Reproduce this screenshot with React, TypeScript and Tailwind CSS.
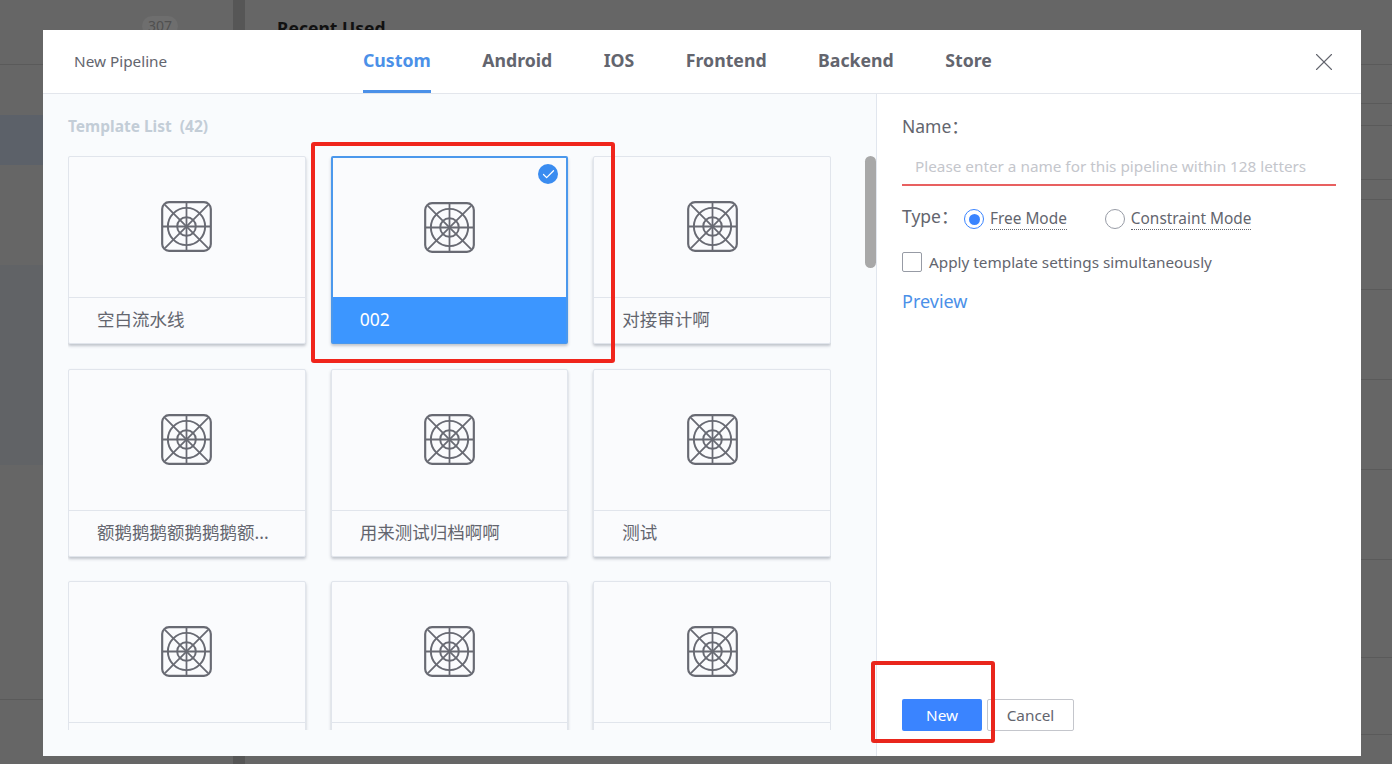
import { Check, X } from "lucide-react";

const font = { sans: "font-['Noto_Sans','Noto_Sans_CJK_SC',sans-serif]" };

const templates = [
  { name: "空白流水线" },
  { name: "002", selected: true },
  { name: "对接审计啊" },
  { name: "额鹅鹅鹅额鹅鹅鹅额..." },
  { name: "用来测试归档啊啊" },
  { name: "测试" },
  { name: "" },
  { name: "" },
  { name: "" },
];

const tabs = ["Custom", "Android", "IOS", "Frontend", "Backend", "Store"];

function TemplateIcon() {
  return (
    <svg width="51" height="51" viewBox="0 0 52 52" fill="none" stroke="#686a73">
      <rect x="1.2" y="1.2" width="49.6" height="49.6" rx="7" strokeWidth="2.2" />
      <circle cx="26" cy="26" r="19" strokeWidth="2" />
      <circle cx="26" cy="26" r="9.5" strokeWidth="2" />
      <path d="M26 1v50M1 26h50" strokeWidth="1.8" />
      <path d="M4 4l44 44M48 4L4 48" strokeWidth="1.8" />
    </svg>
  );
}

function TemplateCard({ name, selected }: { name: string; selected?: boolean }) {
  return (
    <div
      className={`relative h-[188px] rounded-[2px] border bg-[#fafbfd] shadow-[0_2px_3px_rgba(60,70,90,0.3)] ${
        selected ? "border-2 border-[#4b98ec]" : "border-[#e1e5ec]"
      }`}
    >
      {selected && (
        <span className="absolute right-[8px] top-[6px] flex h-5 w-5 items-center justify-center rounded-full bg-[#3a8cf0]">
          <Check size={15} color="#fff" strokeWidth={2} />
        </span>
      )}
      <div className={`flex items-center justify-center pb-[1px] ${selected ? "h-[139px]" : "h-[140px]"}`}>
        <TemplateIcon />
      </div>
      <div
        className={`flex h-[46px] items-center whitespace-nowrap pb-[2px] text-[17.5px] ${
          selected ? "bg-[#3c96ff] pl-[27px] text-white" : "border-t border-[#e1e5ec] pl-[28px] text-[#63656e]"
        }`}
      >
        {name}
      </div>
    </div>
  );
}

function BackgroundRow({ height, line = true, children }: { height: string; line?: boolean; children?: React.ReactNode }) {
  return (
    <div className={`${height} whitespace-nowrap pl-[131px] ${line ? "border-b border-[#5a5a5a]" : ""}`}>{children}</div>
  );
}

function VersionCell() {
  return (
    <div className="pt-[25px] text-sm leading-[18px]">
      <div className="text-[#333]">v_1.0</div>
      <div className="text-[#444]">2020</div>
    </div>
  );
}

export default function App() {
  return (
    <div className={`relative h-[764px] w-[1392px] overflow-hidden bg-[#666666] ${font.sans}`}>
      {/* page behind the dialog */}
      <div className="flex h-full">
        <aside className="flex w-[233px] flex-col">
          <div className="flex h-[65px] justify-end border-b border-[#5a5a5a] pr-[55px] pt-[16px]">
            <span className="h-5 rounded-full bg-[#6e6e6e] px-[6px] text-sm leading-5 text-[#505050]">307</span>
          </div>
          <div className="h-[50px]" />
          <div className="h-[50px] bg-[#5c6169]" />
          <div className="h-[100px]" />
          <div className="h-[200px] bg-[#616366]" />
          <div className="h-[235px] border-b border-[#5a5a5a]" />
        </aside>
        <div className="w-[12px] bg-[#565656]" />
        <main className="flex-1">
          <div className="h-[65px] border-b border-[#5a5a5a] pl-[32px] pt-[15px] text-[17.5px] font-bold text-[#111]">
            Recent Used
          </div>
          <BackgroundRow height="h-[39px]" />
          <BackgroundRow height="h-[22px]" />
          <BackgroundRow height="h-[54px]">
            <div className="pt-[17px] text-sm text-[#222]">Last</div>
          </BackgroundRow>
          <BackgroundRow height="h-[20px]" />
          <BackgroundRow height="h-[90px]">
            <VersionCell />
          </BackgroundRow>
          <BackgroundRow height="h-[90px]">
            <VersionCell />
          </BackgroundRow>
          <BackgroundRow height="h-[90px]">
            <VersionCell />
          </BackgroundRow>
          <BackgroundRow height="h-[90px]">
            <VersionCell />
          </BackgroundRow>
          <BackgroundRow height="h-[98px]" />
          <BackgroundRow height="h-[77px]" />
        </main>
      </div>

      {/* dialog */}
      <div className="absolute left-[43px] top-[30px] flex h-[726px] w-[1318px] flex-col bg-white">
        <header className="flex h-[64px] shrink-0 border-b border-[#e3e6ec]">
          <div className="flex w-[320px] items-center pl-[31px] text-[15.3px] text-[#63656e]">New Pipeline</div>
          <nav className="flex gap-[51.5px]">
            {tabs.map((tab, i) => (
              <div
                key={tab}
                className={`flex h-[63px] items-center border-b-[3px] text-[17.7px] font-bold ${
                  i === 0 ? "border-[#4b90e8] text-[#4b90e8]" : "border-transparent text-[#63656e]"
                }`}
              >
                {tab}
              </div>
            ))}
          </nav>
          <button className="ml-auto flex items-center pr-[22px] text-[#63656e]">
            <X size={30} strokeWidth={0.9} />
          </button>
        </header>

        <div className="flex min-h-0 flex-1">
          <section className="flex w-[834px] shrink-0 border-r border-[#e1e6ee] bg-[#f9fbfd]">
            <div className="w-[822px] pl-[25px]">
              <div className="flex h-[62px] items-center pt-[4px] text-[15.5px] font-bold text-[#c3cdd7]">
                Template List&nbsp; (42)
              </div>
              <div className="h-[574px] w-[763px] overflow-hidden pb-2">
                <div className="grid grid-cols-3 gap-x-[25px] gap-y-[24.5px]">
                  {templates.map((t, i) => (
                    <TemplateCard key={i} name={t.name} selected={t.selected} />
                  ))}
                </div>
              </div>
            </div>
            <div className="mt-[62px] h-[112px] w-[11px] rounded-md bg-[#a8a8a8]" />
          </section>

          <section className="flex flex-1 flex-col pl-[25px] pr-[25px] text-[#63656e]">
            <label className="mt-[20px] text-[17.5px] leading-[24px]">Name：</label>
            <input
              placeholder="Please enter a name for this pipeline within 128 letters"
              className="mt-[14px] h-[34px] w-full border-b-2 border-[#e86060] pb-[4px] pl-[13px] text-[15.3px] outline-none placeholder:text-[#c4c6cc]"
            />
            <div className="mt-[18px] flex items-center">
              <span className="w-[62px] pb-[6px] text-[17.5px] leading-[24px]">Type：</span>
              <span className="flex h-5 w-5 items-center justify-center rounded-full border border-[#3a84ff]">
                <span className="h-[11px] w-[11px] rounded-full bg-[#3a84ff]" />
              </span>
              <span className="ml-[6px] border-b border-dotted border-[#63656e] text-[15.4px] leading-[20px]">Free Mode</span>
              <span className="ml-[38px] h-5 w-5 rounded-full border border-[#979ba5]" />
              <span className="ml-[6px] border-b border-dotted border-[#63656e] text-[15.4px] leading-[20px]">
                Constraint Mode
              </span>
            </div>
            <div className="mt-[17px] flex items-center">
              <span className="h-5 w-5 rounded-[2px] border border-[#979ba5]" />
              <span className="ml-[7px] text-[15.3px]">Apply template settings simultaneously</span>
            </div>
            <a className="mt-[15px] text-lg leading-[24px] text-[#4b90e8]">Preview</a>
            <div className="mt-auto mb-[25px] flex gap-[5px]">
              <button className="h-8 w-[80px] rounded-[2px] bg-[#3a84ff] text-[15.3px] text-white">New</button>
              <button className="h-8 w-[87px] rounded-[2px] border border-[#c4c6cc] text-[15.3px]">Cancel</button>
            </div>
          </section>
        </div>
      </div>

      {/* red markup drawn over the screenshot */}
      <div className="absolute left-[311px] top-[142px] h-[221px] w-[304px] rounded-[3px] border-4 border-[#f0251c]" />
      <div className="absolute left-[871px] top-[661px] h-[82px] w-[124px] rounded-[3px] border-4 border-[#e9261c]" />
    </div>
  );
}
